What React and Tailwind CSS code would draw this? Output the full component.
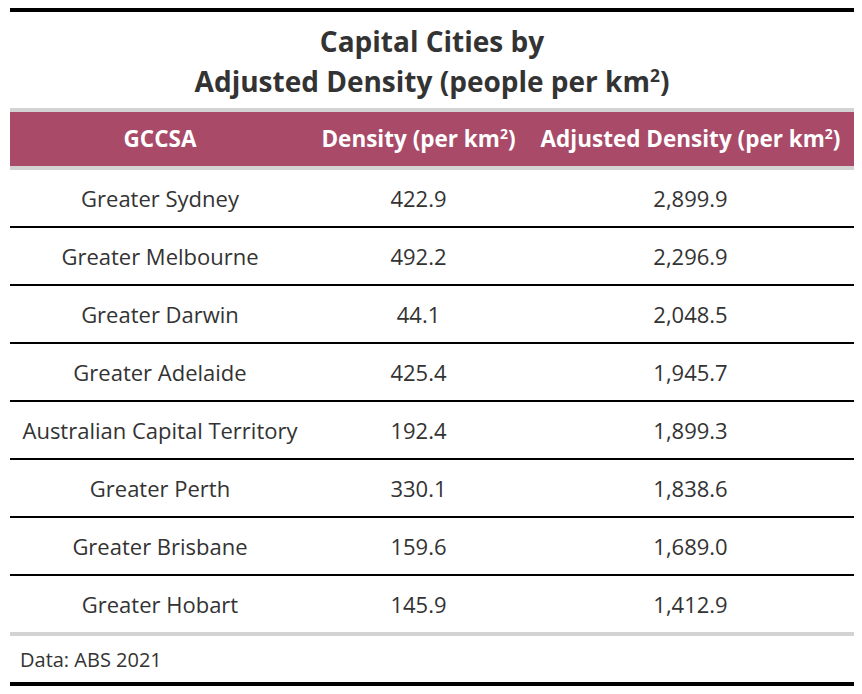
import React from 'react';

const rows = [
    ['Greater Sydney', '422.9', '2,899.9'],
    ['Greater Melbourne', '492.2', '2,296.9'],
    ['Greater Darwin', '44.1', '2,048.5'],
    ['Greater Adelaide', '425.4', '1,945.7'],
    ['Australian Capital Territory', '192.4', '1,899.3'],
    ['Greater Perth', '330.1', '1,838.6'],
    ['Greater Brisbane', '159.6', '1,689.0'],
    ['Greater Hobart', '145.9', '1,412.9'],
];

// small raised "2" for km²
const Sq = () => <span className="relative -top-[0.55em] text-[0.62em] leading-none">2</span>;

const App = () => {
    return (
        <div className="bg-white w-[862px] h-[694px] pt-[8px] pl-[10px]" style={{ fontFamily: '"Open Sans", "Noto Sans", sans-serif' }}>
            <div className="w-[844px] border-t-4 border-b-4 border-black text-[#333333]">
                <div className="h-[96px] flex flex-col items-center justify-center text-[28px] font-bold leading-[40px] pt-[2px]">
                    <div>Capital Cities by</div>
                    <div>Adjusted Density (people per km<Sq />)</div>
                </div>

                <div className="grid grid-cols-[300px_217px_327px] h-[62px] bg-[#a84a68] text-white text-[22.5px] font-bold border-y-4 border-[#d3d3d3] items-center text-center whitespace-nowrap">
                    <div>GCCSA</div>
                    <div>Density (per km<Sq />)</div>
                    <div>Adjusted Density (per km<Sq />)</div>
                </div>

                <div className="text-[22px]">
                    {rows.map((r, i) => (
                        <div
                            key={r[0]}
                            className={`grid grid-cols-[300px_217px_327px] items-center text-center ${i === rows.length - 1 ? 'h-[60px] border-b-4 border-[#d3d3d3]' : 'h-[58px] border-b-2 border-black'}`}
                        >
                            <div>{r[0]}</div>
                            <div>{r[1]}</div>
                            <div>{r[2]}</div>
                        </div>
                    ))}
                </div>

                <div className="h-[46px] flex items-center px-[10px] text-[20px] pt-[2px]">Data: ABS 2021</div>
            </div>
        </div>
    );
};

export default App;
